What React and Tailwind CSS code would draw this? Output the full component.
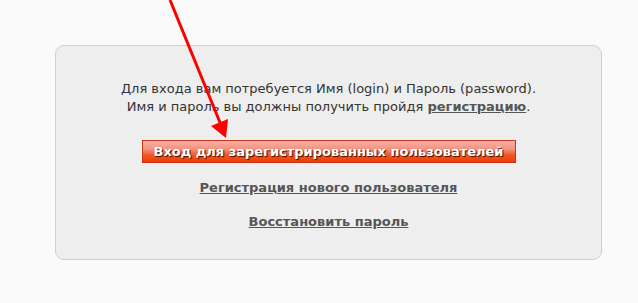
import React from 'react';

const Arrow = () => (
  <svg className="absolute left-0 top-0 pointer-events-none" width="638" height="303">
    <line x1="170" y1="0" x2="221" y2="125" stroke="#ff0000" strokeWidth="3" />
    <polygon points="226,138 211,126 228,119" fill="#ff0000" />
  </svg>
);

const App = () => {
  return (
    <div
      className="relative w-[638px] h-[303px] bg-[#fafafa] pt-[45px] px-[37px] overflow-hidden"
      style={{ fontFamily: '"DejaVu Sans", Verdana, sans-serif' }}
    >
      <div className="ml-[18px] w-[547px] h-[215px] bg-[#eeeeee] border border-[#d0d0d0] rounded-[9px] flex flex-col items-center pt-[34px]">
        <p className="text-[13px] leading-[18px] text-[#333] text-center">
          Для входа вам потребуется Имя (login) и Пароль (password).
          <br />
          Имя и пароль вы должны получить пройдя{' '}
          <a href="#" className="font-bold text-[#555] underline">регистрацию</a>.
        </p>

        {/* Login button */}
        <button className="mt-[24px] w-[374px] h-[23px] border border-[#c8341a] bg-[linear-gradient(to_bottom,#f7b3a3_0%,#f29080_40%,#f05a2a_65%,#f03c00_100%)] text-white font-bold text-[13px] [text-shadow:1px_1px_1px_#3a0a00]">
          Вход для зарегистрированных пользователей
        </button>

        <a href="#" className="mt-[16px] text-[13px] leading-[18px] font-bold text-[#555] underline">
          Регистрация нового пользователя
        </a>
        <a href="#" className="mt-[16px] text-[13px] leading-[18px] font-bold text-[#555] underline">
          Восстановить пароль
        </a>
      </div>
      <Arrow />
    </div>
  );
};

export default App;
